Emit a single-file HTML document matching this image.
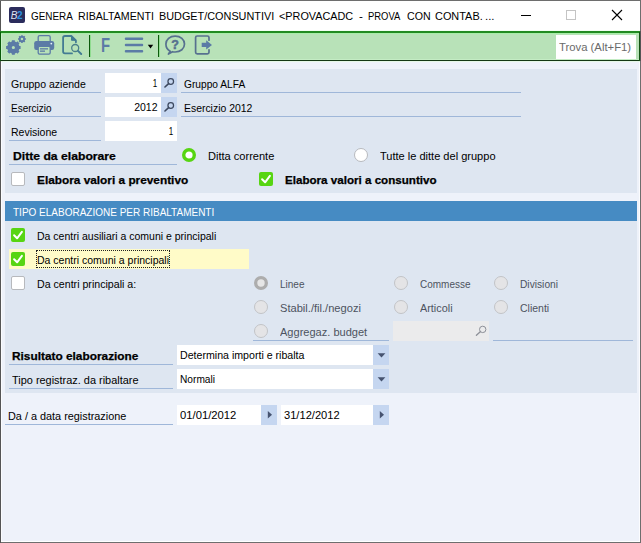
<!DOCTYPE html>
<html><head><meta charset="utf-8"><title>GENERA RIBALTAMENTI BUDGET/CONSUNTIVI</title>
<style>
html,body{margin:0;padding:0;}
body{width:641px;height:543px;overflow:hidden;position:relative;background:#eef2fa;font-family:"Liberation Sans", sans-serif;}
.abs{position:absolute;display:block;}
.tx{white-space:nowrap;font-family:"Liberation Sans", sans-serif;}
</style></head><body>
<div class="abs" style="left:0px;top:0px;width:641px;height:543px;background:#6e6e6e;"></div>
<div class="abs" style="left:0px;top:1px;width:1px;height:542px;background:#555;"></div>
<div class="abs" style="left:1px;top:1px;width:639px;height:541px;background:#fff;"></div>
<div class="abs" style="left:1px;top:31px;width:639px;height:511px;background:#eef2fa;"></div>
<div class="abs" style="left:1px;top:61px;width:1px;height:481px;background:#fbfcfe;"></div>
<div class="abs" style="left:639px;top:61px;width:1px;height:481px;background:#fbfcfe;"></div>
<div class="abs" style="left:1px;top:541px;width:639px;height:1px;background:#fff;"></div>
<div class="abs" style="left:9px;top:7px;width:16px;height:16px;background:#2b2c5c;border-radius:2px"></div>
<div class="abs" style="left:10.8px;top:9.1px;height:13px;white-space:nowrap;font:italic 10px/13px 'Liberation Sans',sans-serif;color:#dfe2f2;letter-spacing:-0.6px">B<span style="color:#2b93df;font-style:normal;font-weight:bold">2</span></div>
<svg class="abs" style="left:507px;top:0" width="134" height="31" viewBox="507 0 134 31"><path d="M521 15.5 H531" stroke="#000" stroke-width="1"/><rect x="566.5" y="10.5" width="9" height="9" fill="none" stroke="#c4c4c4" stroke-width="1"/><path d="M612 10 L622 20 M622 10 L612 20" stroke="#000" stroke-width="1.1"/></svg>
<div class="abs" style="left:1px;top:30px;width:639px;height:1px;background:#f4fff4;"></div>
<div class="abs" style="left:0px;top:31px;width:640px;height:2px;background:#228b22;"></div>
<div class="abs" style="left:1px;top:33px;width:638px;height:1px;background:#a8eea8;"></div>
<div class="abs" style="left:1px;top:34px;width:638px;height:25px;background:#b8e2b8;"></div>
<div class="abs" style="left:1px;top:59px;width:638px;height:1px;background:#c4ecc4;"></div>
<div class="abs" style="left:0px;top:60px;width:640px;height:1px;background:#143814;"></div>
<div class="abs" style="left:1px;top:61px;width:639px;height:1px;background:#e6f8e8;"></div>
<div class="abs" style="left:0px;top:32px;width:1px;height:29px;background:#0a5a0a;"></div>
<div class="abs" style="left:1px;top:34px;width:1px;height:26px;background:#c8f2c8;"></div>
<div class="abs" style="left:639px;top:32px;width:1px;height:29px;background:#145214;"></div>
<div class="abs" style="left:640px;top:31px;width:1px;height:30px;background:#555;"></div>
<div class="abs" style="left:556px;top:35px;width:80px;height:24px;background:#fff;"></div>

<svg class="abs" style="left:0;top:31px" width="641" height="30" viewBox="0 31 641 30">
 <g fill="#5b7ba6" fill-rule="evenodd">
  <path d="M19.37 46.01 L20.60 46.03 L20.60 48.97 L19.37 48.99 L18.66 50.70 L19.52 51.59 L17.44 53.67 L16.55 52.81 L14.84 53.52 L14.82 54.75 L11.88 54.75 L11.86 53.52 L10.15 52.81 L9.26 53.67 L7.18 51.59 L8.04 50.70 L7.33 48.99 L6.10 48.97 L6.10 46.03 L7.33 46.01 L8.04 44.30 L7.18 43.41 L9.26 41.33 L10.15 42.19 L11.86 41.48 L11.88 40.25 L14.82 40.25 L14.84 41.48 L16.55 42.19 L17.44 41.33 L19.52 43.41 L18.66 44.30 Z M14.95 47.50 A1.6 1.6 0 1 0 11.75 47.50 A1.6 1.6 0 1 0 14.95 47.50 Z"/>
  <path d="M25.15 38.25 L25.87 38.26 L25.87 39.84 L25.15 39.85 L24.78 40.75 L25.28 41.26 L24.16 42.38 L23.65 41.88 L22.75 42.25 L22.74 42.97 L21.16 42.97 L21.15 42.25 L20.25 41.88 L19.74 42.38 L18.62 41.26 L19.12 40.75 L18.75 39.85 L18.03 39.84 L18.03 38.26 L18.75 38.25 L19.12 37.35 L18.62 36.84 L19.74 35.72 L20.25 36.22 L21.15 35.85 L21.16 35.13 L22.74 35.13 L22.75 35.85 L23.65 36.22 L24.16 35.72 L25.28 36.84 L24.78 37.35 Z M23.20 39.05 A1.25 1.25 0 1 0 20.70 39.05 A1.25 1.25 0 1 0 23.20 39.05 Z"/>
 </g>
 <!-- printer -->
 <g>
  <rect x="38.2" y="35.6" width="12" height="8" rx="1.5" fill="none" stroke="#5b7ba6" stroke-width="1.3"/>
  <rect x="34.2" y="41" width="20" height="9" rx="2.2" fill="#5b7ba6"/>
  <rect x="38.2" y="46.3" width="12" height="7.8" rx="1.3" fill="#b8e2b8" stroke="#5b7ba6" stroke-width="1.3"/>
  <rect x="40" y="48.2" width="8" height="1.3" fill="#5b7ba6"/>
  <rect x="40" y="50.5" width="5" height="1.3" fill="#5b7ba6"/>
  <circle cx="51.3" cy="43.6" r="0.9" fill="#e8f4ff"/>
 </g>
 <!-- doc search -->
 <g fill="none" stroke="#437b93" stroke-width="1.8" stroke-linejoin="round" stroke-linecap="round">
  <path d="M72 53.4 H65 Q63.1 53.4 63.1 51.6 V37.8 Q63.1 36 65 36 H71.3 L75.9 40.5 V42.3"/>
  <path d="M71.5 36.6 V40.3 H75.3 Z" fill="#437b93" stroke-width="1"/>
  <circle cx="75.2" cy="48" r="3.5" stroke-width="1.3" stroke="#4b7f8a"/>
  <path d="M78 50.9 L81.2 54" stroke-width="2"/>
 </g>
 <!-- separators -->
 <rect x="89" y="35" width="1" height="22" fill="#0c5a0c"/><rect x="90" y="35" width="1" height="22" fill="#8fdc8f"/>
 <rect x="158" y="35" width="1" height="22" fill="#0c5a0c"/><rect x="159" y="35" width="1" height="22" fill="#8fdc8f"/>
 <!-- hamburger -->
 <g fill="#5b7ba6">
  <rect x="124.8" y="37.5" width="18.4" height="2.5" rx="1"/>
  <rect x="124.8" y="43.8" width="18.4" height="2.5" rx="1"/>
  <rect x="124.8" y="50.1" width="18.4" height="2.5" rx="1"/>
 </g>
 <path d="M147.8 44.7 H153.2 L150.5 48.4 Z" fill="#000"/>
 <!-- help -->
 <g fill="none" stroke="#57718f" stroke-width="1.7" stroke-linejoin="round">
  <path d="M170.2 51.2 C167.4 49.8 165.9 47.2 165.9 44.1 C165.9 39.5 169.9 36.1 175.2 36.1 C180.5 36.1 184.5 39.5 184.5 44.1 C184.5 48.7 180.5 52 175.2 52 C174.2 52 173.3 51.9 172.5 51.7 L168.4 54.1 Z"/>
 </g>
 <text x="175.1" y="48.9" text-anchor="middle" font-family="Liberation Sans, sans-serif" font-weight="bold" font-size="12.5" fill="#57718f" stroke="#57718f" stroke-width="0.5">?</text>
 <!-- exit -->
 <g fill="none" stroke="#57718f" stroke-width="1.7" stroke-linejoin="round" stroke-linecap="round">
  <path d="M209 40.2 V37.6 Q209 36 207.4 36 H197.2 Q195.6 36 195.6 37.6 V52.2 Q195.6 53.8 197.2 53.8 H207.4 Q209 53.8 209 52.2 V49.8"/>
 </g>
 <path d="M201.7 42.8 H206.2 V40.3 L212 44.9 L206.2 49.5 V47 H201.7 Z" fill="#5b7ba6"/>
</svg>

<div class="abs" style="left:100.6px;top:32.6px;font:bold 20px/24px 'Liberation Sans',sans-serif;color:#5b7ba6;transform:scaleX(0.74);transform-origin:0 50%">F</div>
<div class="abs" style="left:5px;top:69px;width:632px;height:124px;background:#dee6f1;"></div>
<div class="abs" style="left:5px;top:201px;width:632px;height:20px;background:#468bc3;"></div>
<div class="abs" style="left:5px;top:221px;width:632px;height:172px;background:#dee6f1;"></div>
<div class="abs" style="left:9px;top:92px;width:92px;height:1px;background:#9fb7d9;"></div>
<div class="abs" style="left:105px;top:73px;width:56px;height:20px;background:#fff;"></div>
<div class="abs" style="left:161px;top:73px;width:16px;height:20px;background:#c5d6f0;"></div>
<svg class="abs" style="left:161px;top:73px" width="16" height="20" viewBox="0 0 16 20"><circle cx="9.75" cy="8.45" r="2.8" fill="none" stroke="#3c485f" stroke-width="1.25"/><path d="M7.6 10.6 L3.95 14.0" stroke="#3c485f" stroke-width="1.6" stroke-linecap="round"/></svg>
<div class="abs" style="left:181px;top:92px;width:340px;height:1px;background:#9fb7d9;"></div>
<div class="abs" style="left:9px;top:116px;width:92px;height:1px;background:#9fb7d9;"></div>
<div class="abs" style="left:105px;top:97px;width:56px;height:20px;background:#fff;"></div>
<div class="abs" style="left:161px;top:97px;width:16px;height:20px;background:#c5d6f0;"></div>
<svg class="abs" style="left:161px;top:97px" width="16" height="20" viewBox="0 0 16 20"><circle cx="9.75" cy="8.45" r="2.8" fill="none" stroke="#3c485f" stroke-width="1.25"/><path d="M7.6 10.6 L3.95 14.0" stroke="#3c485f" stroke-width="1.6" stroke-linecap="round"/></svg>
<div class="abs" style="left:181px;top:116px;width:340px;height:1px;background:#9fb7d9;"></div>
<div class="abs" style="left:9px;top:140px;width:92px;height:1px;background:#9fb7d9;"></div>
<div class="abs" style="left:105px;top:121px;width:72px;height:20px;background:#fff;"></div>
<div class="abs" style="left:9px;top:164px;width:168px;height:1px;background:#9fb7d9;"></div>
<svg class="abs" style="left:182px;top:148px" width="14" height="14" viewBox="0 0 14 14"><circle cx="7" cy="7" r="5.3" fill="#fff" stroke="#57d512" stroke-width="3.4"/></svg>
<svg class="abs" style="left:354px;top:148px" width="14" height="14" viewBox="0 0 14 14"><circle cx="7" cy="7" r="6.5" fill="#fff" stroke="#b7b9bd" stroke-width="1"/></svg>
<div class="abs" style="left:11px;top:172px;width:14px;height:14px;background:#fff;border:1px solid #b7b9bd;border-radius:2px;box-sizing:border-box"></div>
<div class="abs" style="left:259px;top:172px;width:14px;height:14px;background:#57d512;border-radius:2px"></div><svg class="abs" style="left:259px;top:172px" width="14" height="14" viewBox="0 0 14 14"><path d="M3.1 7.3 L6.1 10.3 L10.9 3.9" fill="none" stroke="#fff" stroke-width="2" stroke-linecap="round" stroke-linejoin="round"/></svg>
<div class="abs" style="left:11px;top:228px;width:14px;height:14px;background:#57d512;border-radius:2px"></div><svg class="abs" style="left:11px;top:228px" width="14" height="14" viewBox="0 0 14 14"><path d="M3.1 7.3 L6.1 10.3 L10.9 3.9" fill="none" stroke="#fff" stroke-width="2" stroke-linecap="round" stroke-linejoin="round"/></svg>
<div class="abs" style="left:9px;top:249px;width:240px;height:20px;background:#fffbc8;"></div>
<div class="abs" style="left:11px;top:252px;width:14px;height:14px;background:#57d512;border-radius:2px"></div><svg class="abs" style="left:11px;top:252px" width="14" height="14" viewBox="0 0 14 14"><path d="M3.1 7.3 L6.1 10.3 L10.9 3.9" fill="none" stroke="#fff" stroke-width="2" stroke-linecap="round" stroke-linejoin="round"/></svg>
<div class="abs" style="left:36px;top:250px;width:134px;height:18px;box-sizing:border-box;border:1px dotted #222"></div>
<div class="abs" style="left:11px;top:276px;width:14px;height:14px;background:#fff;border:1px solid #b7b9bd;border-radius:2px;box-sizing:border-box"></div>
<svg class="abs" style="left:254px;top:276px" width="14" height="14" viewBox="0 0 14 14"><circle cx="7" cy="7" r="5.35" fill="#e6e6e6" stroke="#adadad" stroke-width="3.3"/></svg>
<svg class="abs" style="left:254px;top:300px" width="14" height="14" viewBox="0 0 14 14"><circle cx="7" cy="7" r="6.5" fill="#e4e4e6" stroke="#c2c3c6" stroke-width="1"/></svg>
<svg class="abs" style="left:254px;top:324px" width="14" height="14" viewBox="0 0 14 14"><circle cx="7" cy="7" r="6.5" fill="#e4e4e6" stroke="#c2c3c6" stroke-width="1"/></svg>
<svg class="abs" style="left:394px;top:276px" width="14" height="14" viewBox="0 0 14 14"><circle cx="7" cy="7" r="6.5" fill="#e4e4e6" stroke="#c2c3c6" stroke-width="1"/></svg>
<svg class="abs" style="left:394px;top:300px" width="14" height="14" viewBox="0 0 14 14"><circle cx="7" cy="7" r="6.5" fill="#e4e4e6" stroke="#c2c3c6" stroke-width="1"/></svg>
<svg class="abs" style="left:494px;top:276px" width="14" height="14" viewBox="0 0 14 14"><circle cx="7" cy="7" r="6.5" fill="#e4e4e6" stroke="#c2c3c6" stroke-width="1"/></svg>
<svg class="abs" style="left:494px;top:300px" width="14" height="14" viewBox="0 0 14 14"><circle cx="7" cy="7" r="6.5" fill="#e4e4e6" stroke="#c2c3c6" stroke-width="1"/></svg>
<div class="abs" style="left:253px;top:340px;width:136px;height:1px;background:#9fb7d9;"></div>
<div class="abs" style="left:393px;top:321px;width:96px;height:20px;background:#ebebec;"></div>
<svg class="abs" style="left:470px;top:321px" width="20" height="20" viewBox="470 321 20 20"><circle cx="482.7" cy="329.4" r="3.2" fill="none" stroke="#8d9098" stroke-width="1"/><path d="M480.3 331.7 L476.4 335.2" stroke="#8d9098" stroke-width="1.3" stroke-linecap="round"/></svg>
<div class="abs" style="left:493px;top:340px;width:140px;height:1px;background:#9fb7d9;"></div>
<div class="abs" style="left:9px;top:364px;width:164px;height:1px;background:#9fb7d9;"></div>
<div class="abs" style="left:177px;top:345px;width:196px;height:20px;background:#fff;"></div>
<div class="abs" style="left:373px;top:345px;width:16px;height:20px;background:#c5d6f0;"></div>
<svg class="abs" style="left:373px;top:345px" width="16" height="20"><path d="M4.6 8.2 H12.4 L8.5 12.4 Z" fill="#465370"/></svg>
<div class="abs" style="left:9px;top:388px;width:164px;height:1px;background:#9fb7d9;"></div>
<div class="abs" style="left:177px;top:369px;width:196px;height:20px;background:#fff;"></div>
<div class="abs" style="left:373px;top:369px;width:16px;height:20px;background:#c5d6f0;"></div>
<svg class="abs" style="left:373px;top:369px" width="16" height="20"><path d="M4.6 8.2 H12.4 L8.5 12.4 Z" fill="#465370"/></svg>
<div class="abs" style="left:5px;top:424px;width:168px;height:1px;background:#9fb7d9;"></div>
<div class="abs" style="left:177px;top:405px;width:84px;height:20px;background:#fff;"></div>
<div class="abs" style="left:261px;top:405px;width:16px;height:20px;background:#c5d6f0;"></div>
<div class="abs" style="left:281px;top:405px;width:92px;height:20px;background:#fff;"></div>
<div class="abs" style="left:373px;top:405px;width:16px;height:20px;background:#c5d6f0;"></div>
<svg class="abs" style="left:261px;top:405px" width="16" height="20"><path d="M6.8 6 L11 9.7 L6.8 13.4 Z" fill="#465370"/></svg>
<svg class="abs" style="left:373px;top:405px" width="16" height="20"><path d="M6.8 6 L11 9.7 L6.8 13.4 Z" fill="#465370"/></svg>
<span class="abs tx" style="left:30.50px;transform-origin:0 50%;top:9.18px;font-size:11.6px;line-height:14px;color:#000;transform:scaleX(0.8532);">GENERA</span>
<span class="abs tx" style="left:78.00px;transform-origin:0 50%;top:9.18px;font-size:11.6px;line-height:14px;color:#000;transform:scaleX(0.9182);">RIBALTAMENTI</span>
<span class="abs tx" style="left:159.20px;transform-origin:0 50%;top:9.18px;font-size:11.6px;line-height:14px;color:#000;transform:scaleX(0.9364);">BUDGET/CONSUNTIVI</span>
<span class="abs tx" style="left:279.20px;transform-origin:0 50%;top:9.18px;font-size:11.6px;line-height:14px;color:#000;transform:scaleX(0.9344);">&lt;PROVACADC</span>
<span class="abs tx" style="left:358.90px;transform-origin:0 50%;top:9.18px;font-size:11.6px;line-height:14px;color:#000;transform:scaleX(1.0000);">-</span>
<span class="abs tx" style="left:367.50px;transform-origin:0 50%;top:9.18px;font-size:11.6px;line-height:14px;color:#000;transform:scaleX(0.8126);">PROVA</span>
<span class="abs tx" style="left:406.70px;transform-origin:0 50%;top:9.18px;font-size:11.6px;line-height:14px;color:#000;transform:scaleX(0.9177);">CON</span>
<span class="abs tx" style="left:435.00px;transform-origin:0 50%;top:9.18px;font-size:11.6px;line-height:14px;color:#000;transform:scaleX(0.9415);">CONTAB.</span>
<span class="abs tx" style="left:485.22px;transform-origin:0 50%;top:9.18px;font-size:11.6px;line-height:14px;color:#000;transform:scaleX(0.9832);">...</span>
<span class="abs tx" style="left:558.90px;transform-origin:0 50%;top:40.19px;font-size:11px;line-height:14px;color:#6a6a6a;transform:scaleX(1.0269);">Trova (Alt+F1)</span>
<span class="abs tx" style="left:11.40px;transform-origin:0 50%;top:77.19px;font-size:11px;line-height:14px;color:#000;transform:scaleX(0.9557);">Gruppo aziende</span>
<span class="abs tx" style="left:11.40px;transform-origin:0 50%;top:101.19px;font-size:11px;line-height:14px;color:#000;transform:scaleX(0.9078);">Esercizio</span>
<span class="abs tx" style="left:11.40px;transform-origin:0 50%;top:125.19px;font-size:11px;line-height:14px;color:#000;transform:scaleX(0.9547);">Revisione</span>
<span class="abs tx" style="left:183.70px;transform-origin:0 50%;top:77.19px;font-size:11px;line-height:14px;color:#000;transform:scaleX(0.9270);">Gruppo ALFA</span>
<span class="abs tx" style="left:183.70px;transform-origin:0 50%;top:101.19px;font-size:11px;line-height:14px;color:#000;transform:scaleX(0.9468);">Esercizio 2012</span>
<span class="abs tx" style="right:483.91px;transform-origin:100% 50%;top:76.19px;font-size:11px;line-height:14px;color:#000;transform:scaleX(0.7333);">1</span>
<span class="abs tx" style="right:483.49px;transform-origin:100% 50%;top:100.19px;font-size:11px;line-height:14px;color:#000;transform:scaleX(0.9527);">2012</span>
<span class="abs tx" style="right:467.91px;transform-origin:100% 50%;top:124.19px;font-size:11px;line-height:14px;color:#000;transform:scaleX(0.7333);">1</span>
<span class="abs tx" style="left:12.50px;transform-origin:0 50%;top:149.19px;font-size:11px;line-height:14px;color:#000;transform:scaleX(1.1067);font-weight:bold;-webkit-text-stroke:0.25px #000;">Ditte da elaborare</span>
<span class="abs tx" style="left:207.70px;transform-origin:0 50%;top:149.19px;font-size:11px;line-height:14px;color:#000;transform:scaleX(1.0044);">Ditta corrente</span>
<span class="abs tx" style="left:379.80px;transform-origin:0 50%;top:149.19px;font-size:11px;line-height:14px;color:#000;transform:scaleX(1.0030);">Tutte le ditte del gruppo</span>
<span class="abs tx" style="left:37.40px;transform-origin:0 50%;top:173.19px;font-size:11px;line-height:14px;color:#000;transform:scaleX(1.0753);font-weight:bold;-webkit-text-stroke:0.25px #000;">Elabora valori a preventivo</span>
<span class="abs tx" style="left:284.90px;transform-origin:0 50%;top:173.19px;font-size:11px;line-height:14px;color:#000;transform:scaleX(1.0547);font-weight:bold;-webkit-text-stroke:0.25px #000;">Elabora valori a consuntivo</span>
<span class="abs tx" style="left:12.50px;transform-origin:0 50%;top:205.19px;font-size:11px;line-height:14px;color:#fff;transform:scaleX(0.9087);">TIPO ELABORAZIONE PER RIBALTAMENTI</span>
<span class="abs tx" style="left:36.70px;transform-origin:0 50%;top:229.19px;font-size:11px;line-height:14px;color:#000;transform:scaleX(0.9549);">Da centri ausiliari a comuni e principali</span>
<span class="abs tx" style="left:36.70px;transform-origin:0 50%;top:253.19px;font-size:11px;line-height:14px;color:#000;transform:scaleX(0.9555);">Da centri comuni a principali</span>
<span class="abs tx" style="left:36.70px;transform-origin:0 50%;top:277.19px;font-size:11px;line-height:14px;color:#000;transform:scaleX(0.9654);">Da centri principali a:</span>
<span class="abs tx" style="left:279.60px;transform-origin:0 50%;top:277.19px;font-size:11px;line-height:14px;color:#4d5360;transform:scaleX(0.9106);">Linee</span>
<span class="abs tx" style="left:279.60px;transform-origin:0 50%;top:301.19px;font-size:11px;line-height:14px;color:#4d5360;transform:scaleX(1.0106);">Stabil./fil./negozi</span>
<span class="abs tx" style="left:279.60px;transform-origin:0 50%;top:325.19px;font-size:11px;line-height:14px;color:#4d5360;transform:scaleX(1.0036);">Aggregaz. budget</span>
<span class="abs tx" style="left:419.60px;transform-origin:0 50%;top:277.19px;font-size:11px;line-height:14px;color:#4d5360;transform:scaleX(0.9080);">Commesse</span>
<span class="abs tx" style="left:419.60px;transform-origin:0 50%;top:301.19px;font-size:11px;line-height:14px;color:#4d5360;transform:scaleX(0.9858);">Articoli</span>
<span class="abs tx" style="left:519.60px;transform-origin:0 50%;top:277.19px;font-size:11px;line-height:14px;color:#4d5360;transform:scaleX(0.9281);">Divisioni</span>
<span class="abs tx" style="left:519.60px;transform-origin:0 50%;top:301.19px;font-size:11px;line-height:14px;color:#4d5360;transform:scaleX(0.9528);">Clienti</span>
<span class="abs tx" style="left:12.20px;transform-origin:0 50%;top:349.19px;font-size:11px;line-height:14px;color:#000;transform:scaleX(1.0773);font-weight:bold;-webkit-text-stroke:0.25px #000;">Risultato elaborazione</span>
<span class="abs tx" style="left:11.70px;transform-origin:0 50%;top:373.19px;font-size:11px;line-height:14px;color:#000;transform:scaleX(0.9933);">Tipo registraz. da ribaltare</span>
<span class="abs tx" style="left:7.70px;transform-origin:0 50%;top:409.19px;font-size:11px;line-height:14px;color:#000;transform:scaleX(0.9872);">Da / a data registrazione</span>
<span class="abs tx" style="left:179.80px;transform-origin:0 50%;top:348.19px;font-size:11px;line-height:14px;color:#000;transform:scaleX(0.9648);">Determina importi e ribalta</span>
<span class="abs tx" style="left:179.80px;transform-origin:0 50%;top:372.19px;font-size:11px;line-height:14px;color:#000;transform:scaleX(0.9239);">Normali</span>
<span class="abs tx" style="left:179.80px;transform-origin:0 50%;top:408.19px;font-size:11px;line-height:14px;color:#000;transform:scaleX(1.0230);">01/01/2012</span>
<span class="abs tx" style="left:284.00px;transform-origin:0 50%;top:408.19px;font-size:11px;line-height:14px;color:#000;transform:scaleX(1.0103);">31/12/2012</span>
</body></html>
